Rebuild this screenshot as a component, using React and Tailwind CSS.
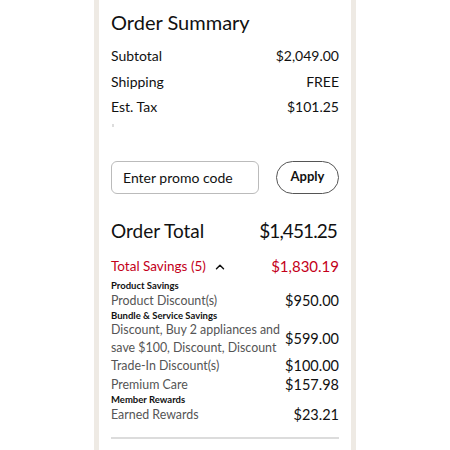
import React from "react";
import { ChevronUp } from "lucide-react";

const font = { fontFamily: "Lato, 'Liberation Sans', sans-serif" };

function Row({ label, value }) {
  return (
    <div className="flex h-[25.5px] items-center justify-between text-[14px] text-[#111]">
      <span>{label}</span>
      <span>{value}</span>
    </div>
  );
}

function SavingsRow({ label, value, h = "h-[20px]" }) {
  return (
    <div className={`flex items-center justify-between ${h}`}>
      <span className="whitespace-nowrap text-[12.4px] leading-[18px] text-[#555]">{label}</span>
      <span className="shrink-0 text-[14.5px] text-[#111]">{value}</span>
    </div>
  );
}

function Heading({ children }) {
  return <div className="h-[10px] text-[9.5px] font-bold leading-[10px] text-[#111]">{children}</div>;
}

export default function App() {
  return (
    <div className="flex h-[450px] w-[450px] justify-center overflow-hidden bg-white" style={font}>
      <div className="h-full w-[262px] border-x-[5px] border-[#eeeae4] bg-white px-[12px]">
        <h2 className="pt-[9px] text-[20px] leading-[26px] text-[#111]">Order Summary</h2>
        <div className="mt-[8px]">
          <Row label="Subtotal" value="$2,049.00" />
          <Row label="Shipping" value="FREE" />
          <Row label="Est. Tax" value="$101.25" />
        </div>
        <div className="ml-[1px] mt-[4px] h-[3px] w-[2px] bg-[#ddd]" />
        <div className="mt-[34px] flex items-center justify-between">
          <div className="flex h-[33px] w-[148px] items-center rounded-[6px] border border-[#bbb] px-[11px] text-[14px] text-[#111]">
            Enter promo code
          </div>
          <button className="flex h-[33px] w-[63px] items-center justify-center rounded-full border border-[#555] text-[13px] font-bold text-[#111]">
            Apply
          </button>
        </div>
        <div className="mt-[24px] flex h-[28px] items-center justify-between text-[19px] text-[#111]">
          <span>Order Total</span>
          <span className="mr-[2px] tracking-[-0.9px]">$1,451.25</span>
        </div>
        <div className="mt-[10px] flex h-[22px] items-center justify-between text-[#c4001a]">
          <span className="flex items-center text-[13.5px]">
            Total Savings (5)
            <ChevronUp className="ml-[7px] h-[14px] w-[14px] text-[#111]" strokeWidth={2.5} />
          </span>
          <span className="text-[15px]">$1,830.19</span>
        </div>
        <div className="mt-[3px]">
          <Heading>Product Savings</Heading>
          <SavingsRow label="Product Discount(s)" value="$950.00" />
          <Heading>Bundle &amp; Service Savings</Heading>
          <SavingsRow
            label={<>Discount, Buy 2 appliances and<br />save $100, Discount, Discount</>}
            value="$599.00"
            h="h-[36px]"
          />
          <SavingsRow label="Trade-In Discount(s)" value="$100.00" h="h-[18px]" />
          <SavingsRow label="Premium Care" value="$157.98" />
          <Heading>Member Rewards</Heading>
          <SavingsRow label="Earned Rewards" value="$23.21" />
        </div>
        <div className="mt-[12px] h-[2px] bg-[#dcdcdc]" />
      </div>
    </div>
  );
}
